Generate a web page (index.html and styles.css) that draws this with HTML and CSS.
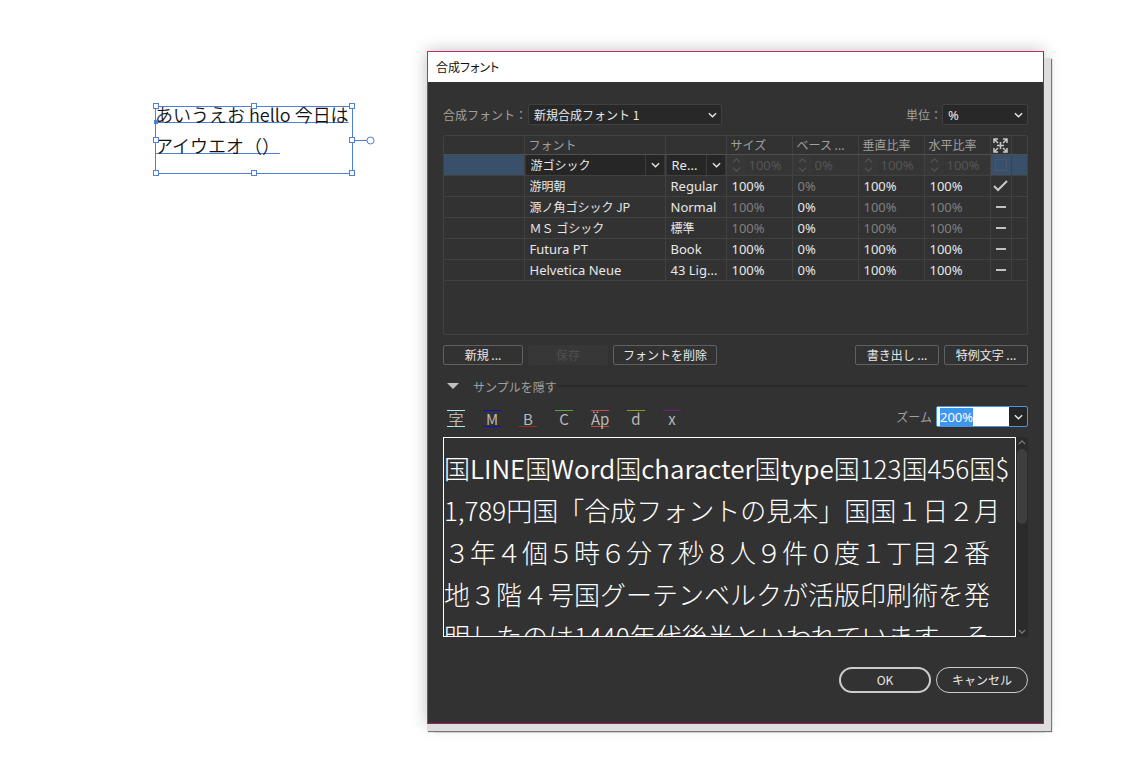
FILE: index.html
```html
<!DOCTYPE html>
<html lang="ja">
<head>
    <meta charset="UTF-8">
    <meta name="viewport" content="width=device-width, initial-scale=1.0">
    <title>合成フォント</title>
    <link rel="stylesheet" href="styles.css">
</head>
<body>

    <!-- Artboard text -->
    <div class="artboard-text">
        <p><span>あいうえお hello 今日は</span></p>
        <p><span>アイウエオ（）</span></p>
        <svg class="frame" width="224" height="76" viewBox="0 0 224 76" aria-hidden="true">
            <g fill="none" stroke="#4f80d9">
                <rect x="4.500" y="4.500" width="197" height="67"/>
                <path d="M201 38.500H216"/>
            </g>
            <rect x="3" y="18" width="4" height="4" fill="#4f80d9"/>
            <g fill="#fff" stroke="#4f80d9">
                <rect x="2.500" y="1.500" width="5" height="5"/>
                <rect x="100.500" y="1.500" width="5" height="5"/>
                <rect x="198.500" y="1.500" width="5" height="5"/>
                <rect x="2.500" y="35.500" width="5" height="5"/>
                <rect x="198.500" y="35.500" width="5" height="5"/>
                <rect x="2.500" y="68.500" width="5" height="5"/>
                <rect x="100.500" y="68.500" width="5" height="5"/>
                <rect x="198.500" y="68.500" width="5" height="5"/>
                <circle cx="219.500" cy="38.500" r="3.500"/>
            </g>
        </svg>
    </div>

    <!-- Shared icons -->
    <svg class="defs" width="0" height="0" aria-hidden="true">
        <symbol id="down" viewBox="0 0 10 6"><path d="M1 1l4 4 4-4" fill="none" stroke="currentColor" stroke-width="1.500"/></symbol>
        <symbol id="spin" viewBox="0 0 10 16"><path d="M1 5l4-4 4 4M1 11l4 4 4-4" fill="none" stroke="currentColor" stroke-width="1.300"/></symbol>
    </svg>

    <!-- Dialog -->
    <div class="dialog" role="dialog" aria-labelledby="title">
        <div class="titlebar" id="title">合成フォント</div>

        <div class="dialog-body">
            <div class="row">
                <label for="fontset">合成フォント：</label>
                <div class="dropdown fontset">
                    <select id="fontset"><option>新規合成フォント 1</option></select>
                    <svg><use href="#down"/></svg>
                </div>
                <label class="push" for="unit">単位：</label>
                <div class="dropdown unit">
                    <select id="unit"><option>%</option></select>
                    <svg><use href="#down"/></svg>
                </div>
            </div>

            <div class="table-box">
                <table>
                    <colgroup>
                        <col class="c-kind"><col><col class="c-style">
                        <col class="c-num"><col class="c-num"><col class="c-num"><col class="c-num">
                        <col class="c-check"><col class="c-end">
                    </colgroup>
                    <thead>
                        <tr>
                            <th></th>
                            <th>フォント</th>
                            <th></th>
                            <th>サイズ</th>
                            <th>ベース ...</th>
                            <th>垂直比率</th>
                            <th>水平比率</th>
                            <th class="mark">
                                <svg width="15" height="15" viewBox="0 0 15 15" aria-label="中心から拡大・縮小">
                                    <path d="M1 5V1h4M10 1h4v4M14 10v4h-4M5 14H1v-4M1 1l4 4M14 1l-4 4M14 14l-4-4M1 14l4-4M7.500 4v7M4 7.500h7" fill="none" stroke="#c8c8c8" stroke-width="1.500"/>
                                </svg>
                            </th>
                            <th></th>
                        </tr>
                    </thead>
                    <tbody>
                        <tr class="selected">
                            <td></td>
                            <td class="edit">
                                <div class="dropdown split">
                                    <select class="jp" aria-label="フォント"><option>游ゴシック</option></select>
                                    <svg><use href="#down"/></svg>
                                </div>
                            </td>
                            <td class="edit">
                                <div class="dropdown split">
                                    <select aria-label="スタイル"><option>Re...</option></select>
                                    <svg><use href="#down"/></svg>
                                </div>
                            </td>
                            <td class="edit"><div class="spinner"><svg><use href="#spin"/></svg><input aria-label="サイズ" value="100%" disabled></div></td>
                            <td class="edit"><div class="spinner"><svg><use href="#spin"/></svg><input aria-label="ベースライン" value="0%" disabled></div></td>
                            <td class="edit"><div class="spinner"><svg><use href="#spin"/></svg><input aria-label="垂直比率" value="100%" disabled></div></td>
                            <td class="edit"><div class="spinner"><svg><use href="#spin"/></svg><input aria-label="水平比率" value="100%" disabled></div></td>
                            <td class="mark"><input type="checkbox" aria-label="中心から拡大・縮小" disabled></td>
                            <td></td>
                        </tr>
                        <tr>
                            <td></td>
                            <td class="jp">游明朝</td>
                            <td>Regular</td>
                            <td>100%</td>
                            <td class="dim">0%</td>
                            <td>100%</td>
                            <td>100%</td>
                            <td class="mark"><svg width="15" height="12" viewBox="0 0 15 12"><path d="M1 6l4 4L14 1" fill="none" stroke="#c8c8c8" stroke-width="2"/></svg></td>
                            <td></td>
                        </tr>
                        <tr>
                            <td></td>
                            <td class="jp">源ノ角ゴシック JP</td>
                            <td>Normal</td>
                            <td class="dim">100%</td>
                            <td>0%</td>
                            <td class="dim">100%</td>
                            <td class="dim">100%</td>
                            <td class="mark"><span class="dash"></span></td>
                            <td></td>
                        </tr>
                        <tr>
                            <td></td>
                            <td class="jp">ＭＳ ゴシック</td>
                            <td class="jp">標準</td>
                            <td class="dim">100%</td>
                            <td>0%</td>
                            <td class="dim">100%</td>
                            <td class="dim">100%</td>
                            <td class="mark"><span class="dash"></span></td>
                            <td></td>
                        </tr>
                        <tr>
                            <td></td>
                            <td>Futura PT</td>
                            <td>Book</td>
                            <td>100%</td>
                            <td>0%</td>
                            <td>100%</td>
                            <td>100%</td>
                            <td class="mark"><span class="dash"></span></td>
                            <td></td>
                        </tr>
                        <tr>
                            <td></td>
                            <td>Helvetica Neue</td>
                            <td>43 Lig...</td>
                            <td>100%</td>
                            <td>0%</td>
                            <td>100%</td>
                            <td>100%</td>
                            <td class="mark"><span class="dash"></span></td>
                            <td></td>
                        </tr>
                    </tbody>
                </table>
            </div>

            <div class="buttons">
                <button class="btn">新規 ...</button>
                <button class="btn" disabled>保存</button>
                <button class="btn">フォントを削除</button>
                <button class="btn wide push">書き出し ...</button>
                <button class="btn wide">特例文字 ...</button>
            </div>

            <button class="disclosure" aria-expanded="true">
                <svg width="12" height="6" viewBox="0 0 12 6"><path d="M0 0h12L6 6z" fill="#c0c0c0"/></svg>
                サンプルを隠す
            </button>

            <div class="row tools">
                <div class="guides">
                    <button class="guide ideo" aria-label="平均字面">字</button>
                    <button class="guide em" aria-label="仮想ボディ">M</button>
                    <button class="guide base" aria-label="ベースライン">B</button>
                    <button class="guide cap" aria-label="キャップハイト">C</button>
                    <button class="guide asc" aria-label="アセント／ディセント">Äp</button>
                    <button class="guide ascender" aria-label="最大アセント">d</button>
                    <button class="guide xheight" aria-label="エックスハイト">x</button>
                </div>
                <label class="push" for="zoom">ズーム</label>
                <div class="zoom">
                    <input id="zoom" type="text" value="200%">
                    <button aria-label="ズームを選択"><svg width="9" height="6"><use href="#down"/></svg></button>
                </div>
            </div>

            <div class="sample">
                <div class="sample-text">
                    <p>国<b>LINE</b>国<b>Word</b>国<b>character</b>国<b>type</b>国123国456国$</p>
                    <p>1,789円国「合成フォントの見本」国国１日２月</p>
                    <p>３年４個５時６分７秒８人９件０度１丁目２番</p>
                    <p>地３階４号国グーテンベルクが活版印刷術を発</p>
                    <p>明したのは1440年代後半といわれています。そ</p>
                </div>
                <div class="scrollbar">
                    <svg class="up" width="8" height="5"><use href="#down"/></svg>
                    <div class="thumb"></div>
                    <svg width="8" height="5"><use href="#down"/></svg>
                </div>
            </div>

            <div class="footer">
                <button class="pill ok">OK</button>
                <button class="pill">キャンセル</button>
            </div>
        </div>
    </div>

    <script>
        // The zoom value starts selected, ready to be typed over
        const zoom = document.getElementById("zoom");
        zoom.focus();
        zoom.select();
    </script>

</body>
</html>
```

FILE: styles.css
```css
* {
    margin: 0;
    padding: 0;
    box-sizing: border-box;
}
body {
    font-family: "Noto Sans", "Noto Sans CJK JP", sans-serif;
    font-size: 13px;
    display: flex;
    align-items: flex-start;
    gap: 75px;
    padding: 51px 84px 36px 155px;
    background: #fff;
}
button, input, select {
    font: inherit;
    color: inherit;
    outline: none;
}
.defs {
    position: absolute;
}
.jp, label, th, .btn, .disclosure, .titlebar, .pill {
    font-family: "Noto Sans CJK JP", sans-serif;
    font-size: 12px;
}
/* Text on the artboard */
.artboard-text {
    position: relative;
    flex: none;
    width: 197px;
    margin-top: 48px;
    font-family: "Noto Sans CJK JP", sans-serif;
    font-size: 18px;
    font-weight: 350;
    line-height: 31px;
    white-space: nowrap;
    color: #111;
}
.artboard-text span {
    text-decoration: underline 1px #4f80d9;
    text-decoration-skip-ink: none;
    text-underline-offset: 0;
}
.frame {
    position: absolute;
    left: -4px;
    top: 3px;
}
/* Dialog window */
.dialog {
    flex: 1;
    min-width: 600px;
    background: #323232;
    color: #e8e8e8;
    border: 1px solid #c42a74;
    border-right-color: #a02058;
    border-bottom-color: #a02058;
    box-shadow:
        7px 7px 0 #dedede,
        0 7px 0 #dedede,
        8px 8px 1px #777,
        1px 8px 1px #777,
        0 0 16px rgba(0, 0, 0, 0.25);
}
.titlebar {
    height: 30px;
    line-height: 29px;
    padding-left: 8px;
    background: #fff;
    color: #111;
    font-feature-settings: "palt";
}
.dialog-body {
    padding: 22px 15px 30px;
}
.row {
    display: flex;
    align-items: center;
    height: 21px;
}
.push {
    margin-left: auto;
}
label {
    color: #a0a0a0;
}
.dropdown {
    position: relative;
    height: 21px;
    background: #282828;
    border: 1px solid #404040;
    border-radius: 2px;
}
.dropdown select {
    width: 100%;
    height: 100%;
    padding-left: 5px;
    appearance: none;
    background: none;
    border: none;
}
.dropdown svg {
    position: absolute;
    right: 4px;
    top: 7px;
    width: 9px;
    height: 6px;
    pointer-events: none;
}
.fontset {
    width: 194px;
    margin-left: 1px;
}
.fontset select {
    font-family: "Noto Sans CJK JP", sans-serif;
    font-size: 12px;
}
.unit {
    width: 86px;
}
/* Font table */
.table-box {
    height: 200px;
    margin-top: 10px;
    border: 1px solid #424242;
    border-radius: 2px;
}
table {
    width: 100%;
    table-layout: fixed;
    border-collapse: collapse;
}
.c-kind { width: 80px; }
.c-style { width: 61px; }
.c-num { width: 66px; }
.c-check { width: 21px; }
.c-end { width: 16px; }
th, td {
    height: 21px;
    padding-left: 5px;
    line-height: 20px;
    text-align: left;
    white-space: nowrap;
    overflow: hidden;
    border: 1px solid #414141;
    border-top: none;
}
th {
    height: 18px;
    padding-left: 4px;
    line-height: 18px;
    font-weight: 400;
    color: #a0a0a0;
    border-bottom: 1px solid #505050;
}
tr > :first-child {
    border-left: none;
}
tr > :last-child {
    border-right: none;
}
.mark {
    padding: 0;
    text-align: center;
    line-height: 0;
}
.dim {
    color: #808080;
}
.dash {
    display: inline-block;
    width: 10px;
    height: 2px;
    vertical-align: middle;
    background: #c0c0c0;
}
.selected td {
    background: #38506a;
}
.selected .edit {
    padding: 0;
    background: #373737;
}
.split {
    height: 20px;
    margin: 0 1px;
    background: #262626;
    border: none;
}
.split select {
    border-right: 1px solid #3c3c3c;
    width: calc(100% - 18px);
}
.spinner {
    display: flex;
    align-items: center;
    height: 20px;
    color: #555;
}
.spinner svg {
    flex: none;
    width: 9px;
    height: 14px;
    margin: 0 5px;
}
.spinner input {
    width: 100%;
    height: 18px;
    padding-left: 3px;
    background: #353535;
    border: none;
}
.selected input[type="checkbox"] {
    appearance: none;
    width: 12px;
    height: 12px;
    border: 1px solid #48586a;
}
/* Buttons */
.buttons {
    display: flex;
    gap: 5px;
    margin-top: 10px;
}
.btn {
    min-width: 80px;
    height: 20px;
    padding: 0 9px;
    line-height: 18px;
    white-space: nowrap;
    background: #323232;
    border: 1px solid #606060;
    border-radius: 2px;
}
.wide {
    min-width: 84px;
}
.btn:disabled {
    color: #505050;
    background: #373737;
    border-color: #373737;
}
.disclosure {
    display: flex;
    align-items: center;
    gap: 14px;
    width: 100%;
    height: 20px;
    margin-top: 11px;
    padding-left: 4px;
    color: #a0a0a0;
    background: none;
    border: none;
}
.disclosure::after {
    content: "";
    flex: 1;
    height: 2px;
    margin-left: -14px;
    background: #292929;
}
/* Guide toggles */
.tools {
    margin-top: 10px;
}
.guides {
    display: flex;
    gap: 18px;
    margin: 3px 0 0 4px;
}
.guide {
    width: 18px;
    height: 17px;
    line-height: 15px;
    font-family: "Noto Sans CJK JP", sans-serif;
    font-size: 15px;
    color: #b8b8b8;
    background: none;
    border: solid transparent;
    border-width: 1px 0;
    white-space: nowrap;
}
.ideo { border-color: #a5f0ee; }
.em { border-color: #1010c8; }
.base { border-bottom-color: #94301c; }
.cap { border-top-color: #4fa83c; }
.asc { border-color: #c94a4a; }
.ascender { border-top-color: #8c9a1c; }
.xheight { border-top-color: #6c2080; }
.zoom {
    display: flex;
    width: 92px;
    height: 21px;
    margin-left: 4px;
    background: #262626;
    border: 1px solid #4a94e0;
    border-radius: 2px;
}
.zoom input {
    flex: 1;
    min-width: 0;
    padding-left: 3px;
    color: #111;
    background: #fff;
    border: none;
}
.zoom input::selection {
    color: #fff;
    background: #3d96f0;
}
.zoom button {
    width: 18px;
    line-height: 0;
    background: none;
    border: none;
}
/* Sample text */
.sample {
    display: flex;
    height: 200px;
    margin-top: 10px;
}
.sample-text {
    flex: 1;
    min-width: 0;
    padding-top: 9px;
    overflow: hidden;
    border: 1px solid #fff;
    font-family: "Noto Sans CJK JP", sans-serif;
    font-size: 26px;
    font-weight: 300;
    line-height: 42px;
    color: #fff;
    white-space: nowrap;
}
.sample-text b {
    font-weight: 350;
}
.scrollbar {
    display: flex;
    flex-direction: column;
    align-items: center;
    width: 12px;
    padding: 3px 0;
    background: #2b2b2b;
    color: #808080;
}
.scrollbar .up {
    transform: rotate(180deg);
}
.thumb {
    width: 10px;
    height: 75px;
    margin: 4px 0 auto;
    border-radius: 5px;
    background: #3e3e3e;
}
.footer {
    display: flex;
    justify-content: flex-end;
    gap: 5px;
    margin-top: 30px;
}
.pill {
    width: 92px;
    height: 26px;
    line-height: 20px;
    background: none;
    border: 1px solid #ccc;
    border-radius: 13px;
}
.ok {
    border-width: 2px;
}
```
